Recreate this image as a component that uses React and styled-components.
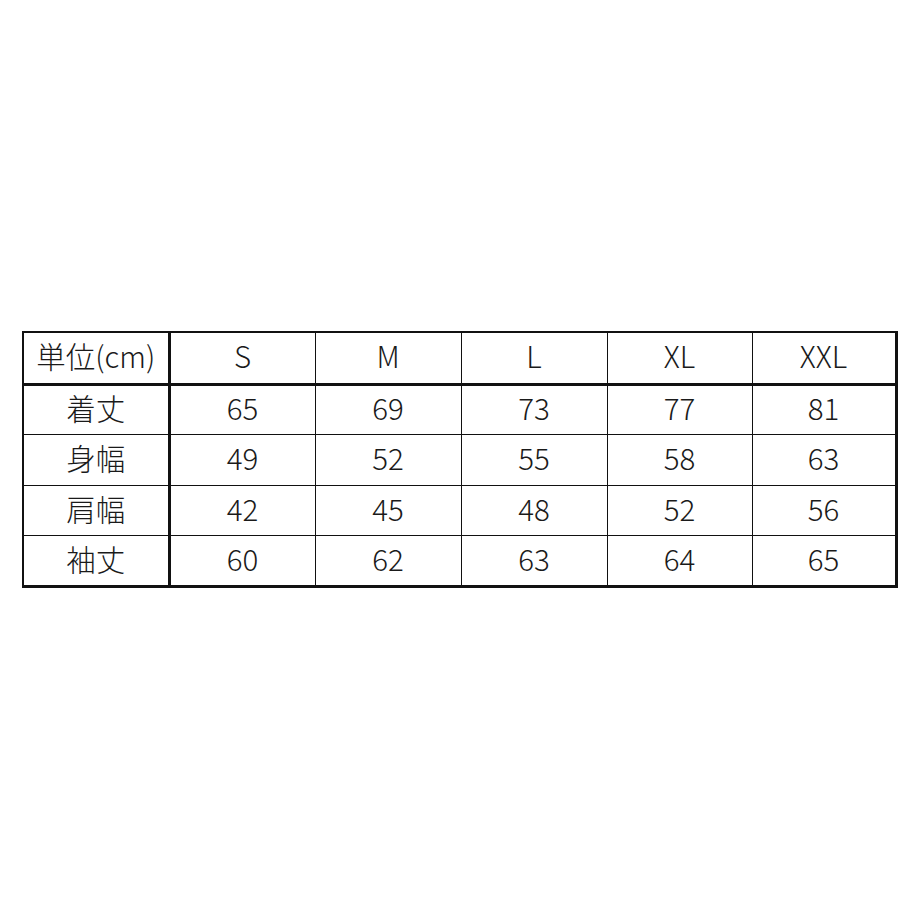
import React from "react";
import styled, { createGlobalStyle } from "styled-components";

const GlobalStyle = createGlobalStyle`
  html, body {
    margin: 0;
    padding: 0;
    background: #ffffff;
  }
`;

const sizes = ["S", "M", "L", "XL", "XXL"];
const colWidths = [146, 146, 146, 146, 145, 144];

const rows = [
  { label: "着丈", values: [65, 69, 73, 77, 81] },
  { label: "身幅", values: [49, 52, 55, 58, 63] },
  { label: "肩幅", values: [42, 45, 48, 52, 56] },
  { label: "袖丈", values: [60, 62, 63, 64, 65] },
];

const App = () => {
  return (
    <Page>
      <GlobalStyle />
      <SizeTable>
        <colgroup>
          {colWidths.map((w, i) => (
            <col key={i} style={{ width: w }} />
          ))}
        </colgroup>
        <thead>
          <HeadRow>
            <LabelCell as="th">単位(cm)</LabelCell>
            {sizes.map((s) => (
              <Cell as="th" key={s}>
                {s}
              </Cell>
            ))}
          </HeadRow>
        </thead>
        <tbody>
          {rows.map((row) => (
            <BodyRow key={row.label}>
              <LabelCell>{row.label}</LabelCell>
              {row.values.map((v, i) => (
                <Cell key={i}>{v}</Cell>
              ))}
            </BodyRow>
          ))}
        </tbody>
      </SizeTable>
    </Page>
  );
};

export default App;

const Page = styled.div`
  width: 920px;
  height: 920px;
  box-sizing: border-box;
  padding: 331px 0 0 22px;
  background: #ffffff;
`;

const SizeTable = styled.table`
  width: 873px;
  table-layout: fixed;
  border-collapse: collapse;
  border-top: 2px solid #111;
  border-left: 2px solid #111;
  border-right: 3px solid #111;
  border-bottom: 3px solid #111;
  font-family: "Noto Sans CJK JP", "Noto Sans", sans-serif;
  font-weight: 300;
  color: #1a1a1a;
`;

const HeadRow = styled.tr`
  height: 52px;
  border-bottom: 3px solid #111;
`;

const BodyRow = styled.tr`
  height: 50.5px;
`;

const Cell = styled.td`
  padding: 0 0 4px;
  border: 1.5px solid #111;
  text-align: center;
  vertical-align: middle;
  font-size: 29.5px;
  font-weight: 300;
  line-height: 1;
`;

const LabelCell = styled(Cell)`
  border-right: 3px solid #111;
`;
